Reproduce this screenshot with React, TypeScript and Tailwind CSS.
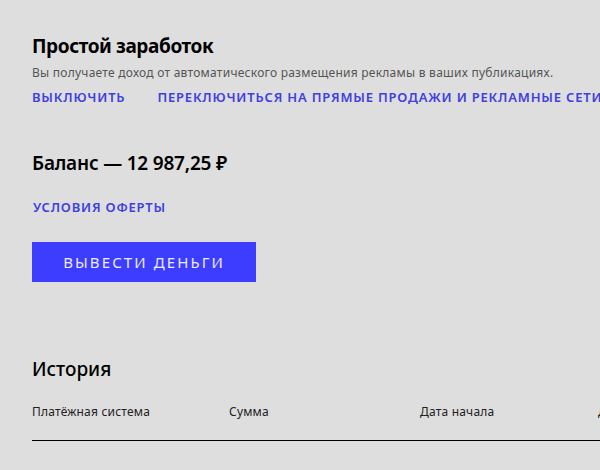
import React from 'react';

const columns = ['Платёжная система', 'Сумма', 'Дата начала', 'Дата окончания'];

const App: React.FC = () => {
  return (
    <div className="h-[470px] w-[600px] overflow-hidden bg-[#dedede] font-['Noto_Sans',sans-serif] text-black">
      <div className="pl-8 pt-[33px]">
        <h1 className="text-[19px] font-bold leading-[26px] tracking-[-0.4px]">Простой заработок</h1>
        <p className="mt-[6px] whitespace-nowrap text-[12px] leading-[16px] tracking-[0.25px] text-[#555]">
          Вы получаете доход от автоматического размещения рекламы в ваших публикациях.
        </p>
        <div className="mt-[7px] flex gap-[32px] whitespace-nowrap text-[13px] font-semibold uppercase leading-[18px] tracking-[0.8px] text-[#4040e0]">
          <span>Выключить</span>
          <span>Переключиться на прямые продажи и рекламные сети</span>
        </div>

        <div className="mt-[45px] text-[19px] font-semibold leading-[24px] tracking-[-0.2px]">Баланс — 12 987,25 ₽</div>
        <div className="mt-[23px] pl-px text-[13px] font-semibold uppercase leading-[18px] tracking-[0.8px] text-[#4040e0]">
          Условия оферты
        </div>
        <button className="mt-[26px] flex h-[40px] w-[224px] items-center justify-center bg-[#3d3dff] text-[15px] uppercase tracking-[2.1px] text-[#ececff]">
          Вывести деньги
        </button>

        <h2 className="mt-[74px] text-[19px] font-medium leading-[26px]">История</h2>
        <div className="mt-[22px] flex whitespace-nowrap text-[12px] leading-[16px] tracking-[0.2px] text-[#222]">
          <span className="w-[197px] shrink-0">{columns[0]}</span>
          <span className="w-[191px] shrink-0">{columns[1]}</span>
          <span className="w-[178px] shrink-0">{columns[2]}</span>
          <span className="shrink-0">{columns[3]}</span>
        </div>
        <div className="mt-[20px] h-px bg-black" />
        <div className="mt-[27px] flex whitespace-nowrap text-[12px] text-[#333]">
          <span className="w-[197px] shrink-0">ЮMoney</span>
          <span className="w-[191px] shrink-0">5 000,00 ₽</span>
          <span className="w-[178px] shrink-0">12.03.2021</span>
        </div>
      </div>
    </div>
  );
};

export default App;
